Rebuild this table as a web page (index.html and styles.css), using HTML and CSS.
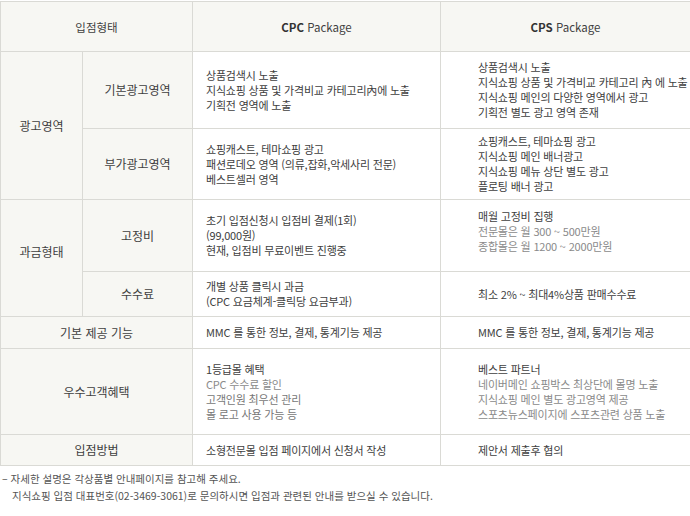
FILE: index.html
```html
<!DOCTYPE html>
<html lang="ko">
<head>
<meta charset="utf-8">
<link rel="stylesheet" href="styles.css">
</head>
<body>
<table class="compare">
  <colgroup>
    <col class="c1"><col class="c2"><col class="c3"><col class="c4">
  </colgroup>
  <thead>
    <tr class="r-head">
      <th colspan="2">입점형태</th>
      <th><b>CPC</b> Package</th>
      <th><b>CPS</b> Package</th>
    </tr>
  </thead>
  <tbody>
    <tr class="r1">
      <td class="label" rowspan="2">광고영역</td>
      <td class="label">기본광고영역</td>
      <td class="cpc"><span class="ln">상품검색시 노출</span><span class="ln">지식쇼핑 상품 및 가격비교 카테고리內에 노출</span><span class="ln">기획전 영역에 노출</span></td>
      <td class="cps"><span class="ln">상품검색시 노출</span><span class="ln">지식쇼핑 상품 및 가격비교 카테고리 內 에 노출</span><span class="ln">지식쇼핑 메인의 다양한 영역에서 광고</span><span class="ln">기획전 별도 광고 영역 존재</span></td>
    </tr>
    <tr class="r2">
      <td class="label">부가광고영역</td>
      <td class="cpc">쇼핑캐스트, 테마쇼핑 광고<br>패션로데오 영역 (의류,잡화,악세사리 전문)<br>베스트셀러 영역</td>
      <td class="cps">쇼핑캐스트, 테마쇼핑 광고<br>지식쇼핑 메인 배너광고<br>지식쇼핑 메뉴 상단 별도 광고<br>플로팅 배너 광고</td>
    </tr>
    <tr class="r3">
      <td class="label lift" rowspan="2">과금형태</td>
      <td class="label">고정비</td>
      <td class="cpc">초기 입점신청시 입점비 결제(1회)<br>(99,000원)<br>현재, 입점비 무료이벤트 진행중</td>
      <td class="cps lift"><span class="dark">매월 고정비 집행</span><br><span class="light">전문몰은 월 300 ~ 500만원<br>종합몰은 월 1200 ~ 2000만원</span></td>
    </tr>
    <tr class="r4">
      <td class="label">수수료</td>
      <td class="cpc">개별 상품 클릭시 과금<br>(CPC 요금체계-클릭당 요금부과)</td>
      <td class="cps">최소 2% ~ 최대4%상품 판매수수료</td>
    </tr>
    <tr class="r5">
      <td class="label" colspan="2">기본 제공 기능</td>
      <td class="cpc">MMC 를 통한 정보, 결제, 통계기능 제공</td>
      <td class="cps">MMC 를 통한 정보, 결제, 통계기능 제공</td>
    </tr>
    <tr class="r6">
      <td class="label" colspan="2">우수고객혜택</td>
      <td class="cpc"><span class="dark">1등급몰 혜택</span><br><span class="light">CPC 수수료 할인</span><br><span class="mid">고객인원 최우선 관리<br>몰 로고 사용 가능 등</span></td>
      <td class="cps"><span class="dark">베스트 파트너</span><br><span class="light">네이버메인 쇼핑박스 최상단에 몰명 노출<br>지식쇼핑 메인 별도 광고영역 제공<br>스포츠뉴스페이지에 스포츠관련 상품 노출</span></td>
    </tr>
    <tr class="r7">
      <td class="label" colspan="2">입점방법</td>
      <td class="cpc">소형전문몰 입점 페이지에서 신청서 작성</td>
      <td class="cps">제안서 제출후 협의</td>
    </tr>
  </tbody>
</table>
<div class="notes">
  <p>– 자세한 설명은 각상품별 안내페이지를 참고해 주세요.</p>
  <p class="indent">지식쇼핑 입점 대표번호(02-3469-3061)로 문의하시면 입점과 관련된 안내를 받으실 수 있습니다.</p>
</div>
</body>
</html>
```

FILE: styles.css
```css
html, body {
  margin: 0;
  padding: 0;
  background: #ffffff;
}
body {
  font-family: "Noto Sans CJK KR", "Noto Sans", sans-serif;
  font-size: 11px;
  color: #444;
  padding-top: 1px;
}
.compare {
  border-collapse: collapse;
  table-layout: fixed;
  width: 690px;
}
.c1 { width: 82px; }
.c2 { width: 110px; }
.c3 { width: 248px; }
.c4 { width: 250px; }
.compare th,
.compare td {
  border: 1px solid #dadad5;
  padding: 0;
  vertical-align: middle;
}
.compare th {
  background: #f7f7f3;
  font-weight: normal;
  font-size: 11.5px;
  color: #3f3f3f;
  text-align: center;
}
.compare th b {
  font-weight: bold;
  color: #333;
}
.compare td.label {
  background: #f7f7f3;
  text-align: center;
  font-size: 12px;
  color: #404040;
  line-height: 16px;
}
.compare td.cpc,
.compare td.cps {
  line-height: 15px;
  color: #404040;
  white-space: nowrap;
  letter-spacing: -0.2px;
}
.ln {
  display: block;
  height: 15px;
  overflow: visible;
}
.compare td.cpc { padding-left: 13px; }
.compare td.cps { padding-left: 37px; }
.compare td.lift { padding-bottom: 12px; }
.compare td.cps.lift { padding-bottom: 8px; }
.r-head { height: 50px; }
.r1 { height: 77px; }
.r2 { height: 71px; }
.r3 { height: 72px; }
.r4 { height: 45px; }
.r5 { height: 32px; }
.r6 { height: 86px; }
.r7 { height: 31px; }
.dark { color: #404040; }
.light { color: #8a8a8a; }
.mid { color: #777; }
.notes {
  padding-top: 4px;
  font-size: 10.5px;
  color: #555;
  line-height: 17px;
}
.notes p { margin: 0; padding-left: 2px; }
.notes p.indent { padding-left: 12px; }
```
